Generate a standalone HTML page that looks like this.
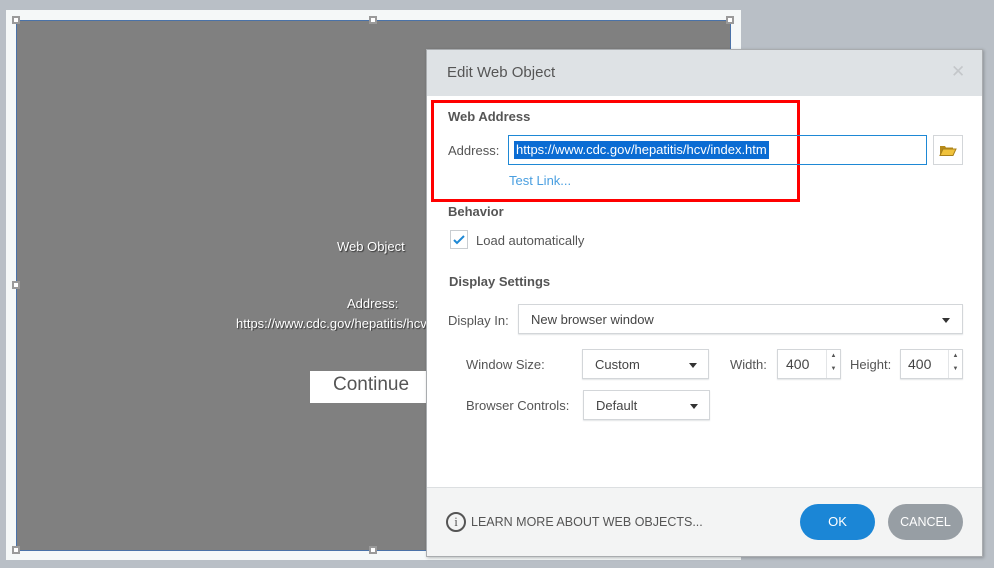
<!DOCTYPE html>
<html><head><meta charset="utf-8"><style>
*{margin:0;padding:0;box-sizing:border-box}
body{width:994px;height:568px;background:#b9bfc6;position:relative;overflow:hidden;font-family:"Liberation Sans",sans-serif;font-size:13px;color:#555}
.a{position:absolute}
.h{position:absolute;width:8px;height:8px;background:#fff;border:2px solid #9a9a9a}
.dd{position:absolute;background:#fff;border:1px solid #d3d6d9;box-shadow:0 1px 1px #e3e5e7}
.tri{position:absolute;width:0;height:0;border-left:4px solid transparent;border-right:4px solid transparent;border-top:5px solid #333}
.lbl{position:absolute;color:#555;font-size:13px}
</style></head><body>
<div class="a" style="left:6px;top:10px;width:735px;height:550px;background:#f5f8f8"></div>
<div class="a" style="left:16px;top:20px;width:715px;height:531px;background:#808080;border:1px solid #4a72a8"></div>
<div class="h" style="left:12px;top:16px"></div>
<div class="h" style="left:369px;top:16px"></div>
<div class="h" style="left:726px;top:16px"></div>
<div class="h" style="left:12px;top:281px"></div>
<div class="h" style="left:12px;top:546px"></div>
<div class="h" style="left:369px;top:546px"></div>
<div class="a" style="left:337px;top:239px;color:#fff;font-size:13px;text-shadow:1px 1px 1px #333">Web Object</div>
<div class="a" style="left:347px;top:296px;color:#fff;font-size:13px;text-shadow:1px 1px 1px #333">Address:</div>
<div class="a" style="left:236px;top:316px;color:#fff;font-size:13px;text-shadow:1px 1px 1px #333;white-space:nowrap;width:190px;overflow:hidden">https://www.cdc.gov/hepatitis/hcv/index.htm</div>
<div class="a" style="left:310px;top:371px;width:120px;height:32px;background:#fff;font-size:19px;color:#555;padding:3px 0 0 23px">Continue</div>

<div class="a" style="left:426px;top:49px;width:557px;height:508px;background:#fff;border:1px solid #a9acaf;box-shadow:1px 1px 3px rgba(0,0,0,.25)">
 <div class="a" style="left:0;top:0;width:555px;height:46px;background:#dee2e5"></div>
 <div class="a" style="left:20px;top:14px;font-size:15px;color:#555">Edit Web Object</div>
 <div class="a" style="left:524px;top:12px;font-size:17px;color:#c4c7ca">✕</div>
 <div class="a" style="left:0;top:437px;width:555px;height:69px;background:#f3f4f4;border-top:1px solid #dcdfe1"></div>
</div>
<div class="a" style="left:431px;top:100px;width:369px;height:102px;border:3px solid #f00"></div>
<div class="a" style="left:448px;top:109px;font-size:13px;font-weight:bold;color:#555">Web Address</div>
<div class="lbl" style="left:448px;top:143px">Address:</div>
<div class="a" style="left:508px;top:135px;width:419px;height:30px;border:1px solid #1e88d5"></div>
<div class="a" style="left:514px;top:141px;height:18px;background:#0b6cd3;color:#fff;font-size:13px;padding:1px 2px">https://www.cdc.gov/hepatitis/hcv/index.htm</div>
<div class="a" style="left:933px;top:135px;width:30px;height:30px;border:1px solid #d3d6d9;background:#fff">
 <svg width="28" height="28" viewBox="0 0 28 28"><path d="M6 10h5l1 1.5h7v2H9l-3 6z" fill="#b68a1a"/><path d="M6 19.5l3-6.5h13l-3 6.5z" fill="#f0c23c" stroke="#a8801a" stroke-width="1"/></svg>
</div>
<div class="a" style="left:509px;top:173px;color:#4a9fe0;font-size:13px">Test Link...</div>
<div class="a" style="left:448px;top:204px;font-size:13px;font-weight:bold;color:#555">Behavior</div>
<div class="a" style="left:450px;top:230px;width:18px;height:19px;border:1px solid #c9cdd1;background:#fff">
 <svg width="16" height="17" viewBox="0 0 16 17"><path d="M3 9l3 3 7-7" stroke="#1e88d5" stroke-width="2" fill="none"/></svg>
</div>
<div class="lbl" style="left:476px;top:233px">Load automatically</div>
<div class="a" style="left:449px;top:274px;font-size:13px;font-weight:bold;color:#555">Display Settings</div>
<div class="lbl" style="left:448px;top:313px">Display In:</div>
<div class="dd" style="left:518px;top:304px;width:445px;height:30px"></div>
<div class="lbl" style="left:531px;top:312px;color:#444">New browser window</div>
<div class="tri" style="left:942px;top:318px"></div>
<div class="lbl" style="left:466px;top:357px">Window Size:</div>
<div class="dd" style="left:582px;top:349px;width:127px;height:30px"></div>
<div class="lbl" style="left:595px;top:357px;color:#444">Custom</div>
<div class="tri" style="left:689px;top:363px"></div>
<div class="lbl" style="left:730px;top:357px">Width:</div>
<div class="dd" style="left:777px;top:349px;width:64px;height:30px"></div>
<div class="lbl" style="left:786px;top:356px;color:#444;font-size:14px">400</div>
<div class="a" style="left:826px;top:350px;width:14px;height:28px;border-left:1px solid #e3e5e7;font-size:6px;color:#555;text-align:center;line-height:13px">▲<br>▼</div>
<div class="lbl" style="left:850px;top:357px">Height:</div>
<div class="dd" style="left:900px;top:349px;width:63px;height:30px"></div>
<div class="lbl" style="left:908px;top:356px;color:#444;font-size:14px">400</div>
<div class="a" style="left:948px;top:350px;width:14px;height:28px;border-left:1px solid #e3e5e7;font-size:6px;color:#555;text-align:center;line-height:13px">▲<br>▼</div>
<div class="lbl" style="left:466px;top:398px">Browser Controls:</div>
<div class="dd" style="left:583px;top:390px;width:127px;height:30px"></div>
<div class="lbl" style="left:596px;top:398px;color:#444">Default</div>
<div class="tri" style="left:690px;top:404px"></div>
<div class="a" style="left:446px;top:512px;width:20px;height:20px;border:2px solid #555;border-radius:50%;text-align:center;font-size:13px;line-height:16px;color:#555;font-family:'Liberation Serif',serif">i</div>
<div class="lbl" style="left:471px;top:515px;font-size:12.5px">LEARN MORE ABOUT WEB OBJECTS...</div>
<div class="a" style="left:800px;top:504px;width:75px;height:36px;border-radius:18px;background:#1b86d6;color:#fff;font-size:13px;text-align:center;line-height:36px">OK</div>
<div class="a" style="left:888px;top:504px;width:75px;height:36px;border-radius:18px;background:#979ea4;color:#fff;font-size:12.5px;text-align:center;line-height:36px">CANCEL</div>
</body></html>
